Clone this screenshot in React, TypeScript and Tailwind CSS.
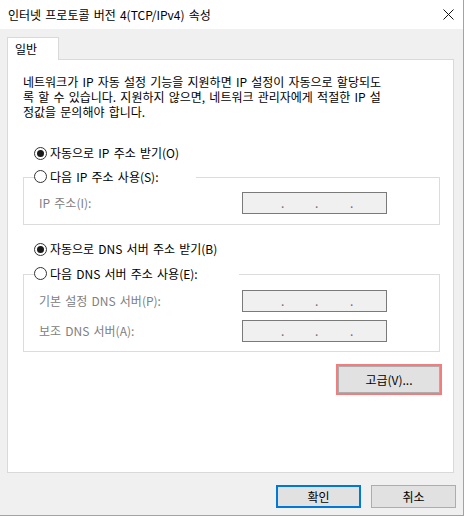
import React from "react";

const Radio = ({ checked }: { checked?: boolean }) => (
  <svg width="13" height="13" viewBox="0 0 13 13" className="shrink-0">
    <circle cx="6.5" cy="6.5" r="6" fill="#fff" stroke="#333" strokeWidth="1" />
    {checked && <circle cx="6.5" cy="6.5" r="3.5" fill="#1a1a1a" />}
  </svg>
);

const IpBox = () => (
  <div className="flex h-[22px] w-[145px] items-center border border-[#7a7a7a] bg-[#f0f0f0] pl-[38px] text-[#6d6d6d]">
    <span className="w-[34px]">.</span>
    <span className="w-[35px]">.</span>
    <span>.</span>
  </div>
);

const Field = ({ label, className }: { label: string; className?: string }) => (
  <div className={"flex items-center pl-[15px] " + (className ?? "")}>
    <span className="w-[203px] text-[#808080]">{label}</span>
    <IpBox />
  </div>
);

const App = () => {
  return (
    <div className="h-[517px] w-[465px] bg-white font-['Noto_Sans_CJK_KR',sans-serif] text-[12px] leading-[16px] text-black [word-spacing:1.5px]">
      <div className="flex h-[516px] w-[464px] flex-col border-r border-b border-[#a3a3a3]">
        {/* title bar */}
        <div className="flex h-[29px] shrink-0 items-center justify-between bg-white pl-[8px] pr-[9px]">
          <span>인터넷 프로토콜 버전 4(TCP/IPv4) 속성</span>
          <svg width="11" height="11" viewBox="0 0 11 11">
            <path d="M0.5 0.5 L10.5 10.5 M10.5 0.5 L0.5 10.5" stroke="#111" strokeWidth="1" />
          </svg>
        </div>

        <div className="flex flex-1 flex-col bg-[#f0f0f0] pl-[7px] pr-[7px] pt-[8px]">
          {/* tab */}
          <div className="relative z-10 -mb-px flex h-[23px] w-[52px] items-center border-x border-t border-[#d9d9d9] bg-white pl-[7px]">
            일반
          </div>

          {/* panel */}
          <div className="mr-[2px] flex h-[414px] flex-col border border-[#d9d9d9] bg-white pl-[15px] pr-[13px]">
            <div className="mt-[14px] flex flex-col whitespace-nowrap">
              <div className="h-[15px] leading-[15px]">네트워크가 IP 자동 설정 기능을 지원하면 IP 설정이 자동으로 할당되도</div>
              <div className="h-[15px] leading-[15px]">록 할 수 있습니다. 지원하지 않으면, 네트워크 관리자에게 적절한 IP 설</div>
              <div className="h-[15px] leading-[15px]">정값을 문의해야 합니다.</div>
            </div>

            <div className="ml-[11px] mt-[26px] flex h-[16px] items-center gap-[3px]">
              <Radio checked />
              <span>자동으로 IP 주소 받기(O)</span>
            </div>

            <div className="mt-[16px] border border-[#dcdcdc] pb-[10px]">
              <div className="-mt-[10px] ml-[10px] flex h-[17px] w-[162px] items-center gap-[3px] bg-white">
                <Radio />
                <span>다음 IP 주소 사용(S):</span>
              </div>
              <Field label="IP 주소(I):" className="mt-[7px]" />
            </div>

            <div className="ml-[11px] mt-[16px] flex h-[16px] items-center gap-[3px]">
              <Radio checked />
              <span>자동으로 DNS 서버 주소 받기(B)</span>
            </div>

            <div className="mt-[17px] border border-[#dcdcdc] pb-[9px]">
              <div className="-mt-[10px] ml-[10px] flex h-[17px] w-[205px] items-center gap-[3px] bg-white">
                <Radio />
                <span>다음 DNS 서버 주소 사용(E):</span>
              </div>
              <Field label="기본 설정 DNS 서버(P):" className="mt-[8px]" />
              <Field label="보조 DNS 서버(A):" className="mt-[8px]" />
            </div>

            <div className="-mr-[2px] mt-[12px] flex justify-end">
              <div className="border-2 border-[#f47c7c]">
                <button className="flex h-[27px] w-[102px] items-center justify-center border border-[#adadad] bg-[#e1e1e1]">
                  고급(V)...
                </button>
              </div>
            </div>
          </div>

          {/* dialog buttons */}
          <div className="mt-[12px] flex justify-end gap-[10px]">
            <button className="flex h-[23px] w-[85px] items-center justify-center border-2 border-[#0078d7] bg-[#e1e1e1]">
              확인
            </button>
            <button className="flex h-[23px] w-[85px] items-center justify-center border border-[#adadad] bg-[#e1e1e1]">
              취소
            </button>
          </div>
        </div>
      </div>
    </div>
  );
};

export default App;
